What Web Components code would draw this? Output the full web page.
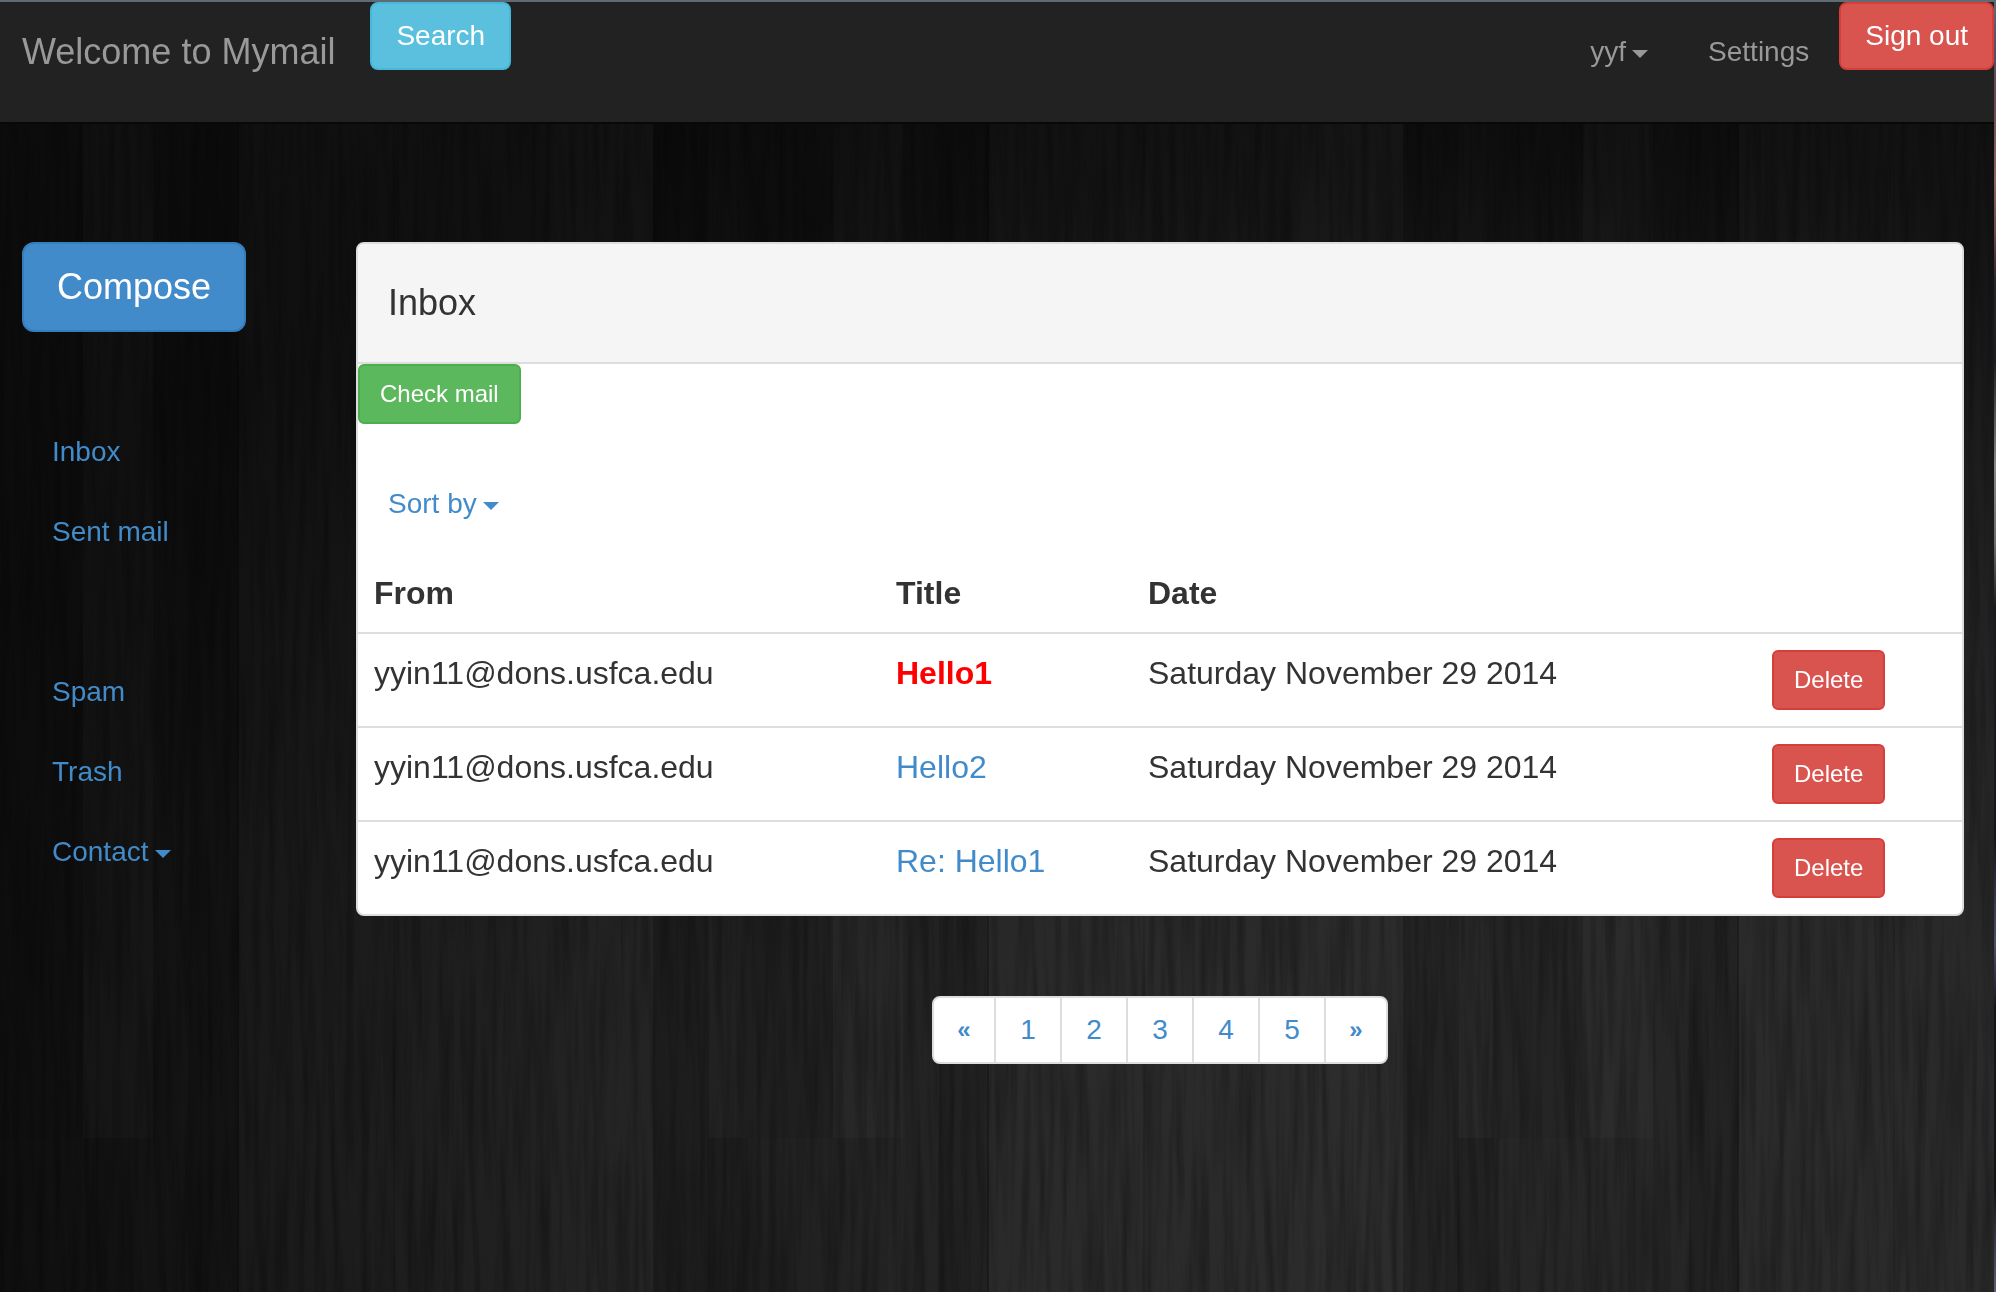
<!DOCTYPE html>
<html lang="en">
<head>
<meta charset="utf-8">
<meta name="viewport" content="width=device-width, initial-scale=1">
<title>Mymail</title>
<style>
  html { height: 100%; }
  body {
    margin: 0; min-height: 100%;
    font-family: "Helvetica Neue", "Liberation Sans", Arial, sans-serif;
    font-size: 28px; line-height: 40px; color: #333; background: #0b0b0b;
  }
</style>
</head>
<body>
<mail-app></mail-app>

<script>
const define = (name, markup, setup) => {
  const template = document.createElement('template');
  template.innerHTML = markup;
  customElements.define(name, class extends HTMLElement {
    constructor() {
      super();
      this.attachShadow({ mode: 'open' }).append(template.content.cloneNode(true));
    }
    connectedCallback() {
      if (setup && !this.ready) { this.ready = true; setup(this, this.shadowRoot); }
    }
  });
};

/* Dark plank floor behind the page */
define('wood-floor', `
  <style>
    :host { display: block; position: fixed; inset: 0; z-index: -1;
      background: radial-gradient(1700px 1150px at 75% 90%, #292929 0%, #272727 30%, #1d1d1d 60%, #101010 88%, #0d0d0d 100%); }
    svg { display: block; width: 100%; height: 100%; }
  </style>
  <svg aria-hidden="true">
    <defs>
      <filter id="grain" x="0" y="0" width="100%" height="100%" color-interpolation-filters="sRGB">
        <feTurbulence type="fractalNoise" baseFrequency="0.13 0.006" numOctaves="3" seed="7"/>
        <feColorMatrix values="0 0 0 0 0  0 0 0 0 0  0 0 0 0 0  0.6 0 0 0 -0.22"/>
      </filter>
      <pattern id="planks" patternUnits="userSpaceOnUse" x="239" y="0" width="750" height="1500">
        <g fill="#fff" fill-opacity=".012">
          <rect width="155" height="1500"/>
          <rect x="155" width="156" height="1500"/>
          <rect x="311" width="103" height="1500" fill-opacity=".02"/>
          <rect x="594" width="70" height="1138"/>
        </g>
        <g fill="#000">
          <rect x="414" width="56" height="1500" fill-opacity=".12"/>
          <rect x="504" width="90" height="1138" fill-opacity=".1"/>
          <rect x="469" y="1138" width="40" height="400" fill-opacity=".16"/>
          <rect x="509" y="1138" width="140" height="400" fill-opacity=".06"/>
          <rect x="664" width="50" height="1500" fill-opacity=".06"/>
          <rect x="700" width="50" height="1500" fill-opacity=".12"/>
          <rect x="154" width="2" height="1500" fill-opacity=".12"/>
          <rect x="748" width="2" height="1500" fill-opacity=".15"/>
        </g>
      </pattern>
    </defs>
    <rect width="100%" height="100%" fill="url(#planks)"/>
    <rect width="100%" height="100%" filter="url(#grain)"/>
  </svg>`);

define('drop-caret', `
  <style>
    :host { display: inline-block; margin-left: 6px; vertical-align: middle;
      border-top: 8px solid currentColor; border-left: 8px solid transparent; border-right: 8px solid transparent; }
  </style>`);

define('ui-button', `
  <style>
    :host { display: block; --bg: #428bca; --edge: #357ebd; }
    :host([kind="info"]) { --bg: #5bc0de; --edge: #46b8da; }
    :host([kind="success"]) { --bg: #5cb85c; --edge: #4cae4c; }
    :host([kind="danger"]) { --bg: #d9534f; --edge: #d43f3a; }
    button { display: block; margin: 0; padding: 12px 24px; border: 2px solid var(--edge); border-radius: 8px;
      background: var(--bg); color: #fff; font: inherit; font-size: 28px; line-height: 40px; white-space: nowrap; cursor: pointer; }
    :host([size="small"]) button { padding: 10px 20px; font-size: 24px; line-height: 36px; border-radius: 6px; }
    :host([size="large"]) button { padding: 20px 33px; font-size: 36px; line-height: 46px; border-radius: 12px; }
  </style>
  <button type="button"><slot></slot></button>`);

define('nav-link', `
  <style>
    :host { display: block; color: #428bca; }
    a { display: block; padding: 20px 30px; color: inherit; text-decoration: none; white-space: nowrap; }
    drop-caret { display: none; }
    :host([menu]) drop-caret { display: inline-block; }
  </style>
  <a href="#"><slot></slot><drop-caret></drop-caret></a>`);

define('top-bar', `
  <style>
    :host { display: block; background: #222; border-top: 2px solid #5f6c74; border-bottom: 2px solid #080808; }
    nav { display: flex; align-items: flex-start; min-height: 120px; }
    .brand { padding: 30px 35px 30px 22px; font-size: 36px; color: #999; text-decoration: none; white-space: nowrap; }
    .links { display: flex; align-items: flex-start; margin-left: auto; }
    nav-link { color: #999; padding-top: 10px; }
  </style>
  <nav>
    <a class="brand" href="#">Welcome to Mymail</a>
    <ui-button kind="info">Search</ui-button>
    <div class="links">
      <nav-link menu>yyf</nav-link>
      <nav-link>Settings</nav-link>
      <ui-button kind="danger">Sign out</ui-button>
    </div>
  </nav>`);

define('side-nav', `
  <style>
    :host { display: block; }
    ui-button { width: max-content; }
    ul { list-style: none; margin: 80px 0 0; padding: 0; }
    .gap { height: 80px; }
  </style>
  <ui-button size="large">Compose</ui-button>
  <ul>
    <li><nav-link>Inbox</nav-link></li>
    <li><nav-link>Sent mail</nav-link></li>
    <li class="gap" aria-hidden="true"></li>
    <li><nav-link>Spam</nav-link></li>
    <li><nav-link>Trash</nav-link></li>
    <li><nav-link menu>Contact</nav-link></li>
  </ul>`);

const mails = [
  { from: 'yyin11@dons.usfca.edu', title: 'Hello1', date: 'Saturday November 29 2014', unread: true },
  { from: 'yyin11@dons.usfca.edu', title: 'Hello2', date: 'Saturday November 29 2014' },
  { from: 'yyin11@dons.usfca.edu', title: 'Re: Hello1', date: 'Saturday November 29 2014' }
];

define('mail-table', `
  <style>
    :host { display: block; }
    table { width: 100%; table-layout: fixed; border-collapse: separate; border-spacing: 0; font-size: 32px; line-height: 46px; }
    .from { width: 522px; } .title { width: 252px; } .action { width: 206px; }
    th, td { box-sizing: border-box; padding: 16px; text-align: left; vertical-align: top; }
    tbody td { border-top: 2px solid #ddd; }
    a { color: #428bca; text-decoration: none; }
    .unread a { color: #f00; font-weight: bold; }
    ui-button { width: max-content; }
  </style>
  <table>
    <colgroup><col class="from"><col class="title"><col><col class="action"></colgroup>
    <thead><tr><th scope="col">From</th><th scope="col">Title</th><th scope="col">Date</th><td></td></tr></thead>
    <tbody></tbody>
  </table>`, (host, root) => {
  root.querySelector('tbody').innerHTML = mails.map(m => `
    <tr class="${m.unread ? 'unread' : ''}"><td>${m.from}</td><td><a href="#">${m.title}</a></td><td>${m.date}</td>
    <td><ui-button kind="danger" size="small">Delete</ui-button></td></tr>`).join('');
});

define('mail-panel', `
  <style>
    :host { display: block; overflow: hidden; background: #fff; border: 2px solid #ddd; border-radius: 8px; }
    header { padding: 39px 30px; background: #f5f5f5; border-bottom: 2px solid #ddd; }
    h3 { margin: 0; font-size: 36px; line-height: 40px; font-weight: 500; }
    ui-button { width: max-content; }
    nav-link { margin: 40px 0 10px; width: max-content; }
  </style>
  <header><h3><slot name="heading"></slot></h3></header>
  <ui-button kind="success" size="small">Check mail</ui-button>
  <nav-link menu>Sort by</nav-link>
  <slot></slot>`);

define('page-pager', `
  <style>
    :host { display: block; }
    ul { display: flex; justify-content: center; list-style: none; margin: 0; padding: 0; }
    a { display: block; box-sizing: border-box; width: 68px; padding: 12px 0; text-align: center;
      background: #fff; border: 2px solid #ddd; color: #428bca; text-decoration: none; }
    li + li a { margin-left: -2px; }
    li:first-child a, li:last-child a { width: 64px; font-size: 24px; font-weight: bold; }
    li:first-child a { border-radius: 8px 0 0 8px; }
    li:last-child a { border-radius: 0 8px 8px 0; }
  </style>
  <nav aria-label="Pages"><ul></ul></nav>`, (host, root) => {
  root.querySelector('ul').innerHTML = ['«', '1', '2', '3', '4', '5', '»']
    .map(p => `<li><a href="#">${p}</a></li>`).join('');
});

/* Thin strip along the right window edge */
define('edge-strip', `
  <style>
    :host { display: block; background: linear-gradient(#5f6c74, #5b4a62 4%, #6b4a50 8%, #8a6560 14%, #6a4a4c 18%,
      #26222c 22%, #1c1c24 28%, #8a8784 36%, #6f6b69 42%, #1a1a22 47%, #14161f 65%, #4a5068 73%, #14161e 78%, #101218 92%, #5a6072 100%); }
  </style>`);

define('mail-app', `
  <style>
    :host { display: grid; grid-template-columns: minmax(0, 1fr) 2px; min-height: 100vh; }
    main { display: grid; grid-template-columns: 334px minmax(0, 1fr); align-items: start; padding: 118px 30px 0 22px; }
    page-pager { margin: 80px 0; }
  </style>
  <wood-floor></wood-floor>
  <div>
    <top-bar></top-bar>
    <main>
      <side-nav></side-nav>
      <section>
        <mail-panel><span slot="heading">Inbox</span><mail-table></mail-table></mail-panel>
        <page-pager></page-pager>
      </section>
    </main>
  </div>
  <edge-strip></edge-strip>`);
</script>
</body>
</html>
